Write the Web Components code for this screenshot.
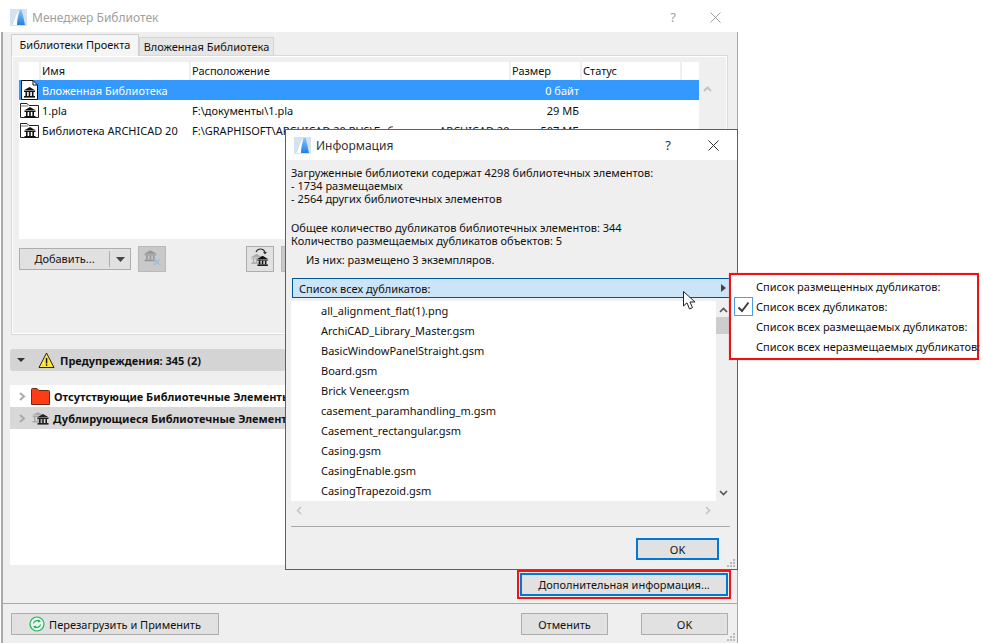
<!DOCTYPE html>
<html>
<head>
<meta charset="utf-8">
<title>Менеджер Библиотек</title>
<style>
    html, body { margin: 0; padding: 0; background: #fff; }
    body { width: 983px; height: 643px; position: relative; overflow: hidden; font: 11px "Noto Sans", "Open Sans", sans-serif; color: #111; }
</style>
</head>
<body>
<manager-window></manager-window>
<info-dialog></info-dialog>
<dup-menu></dup-menu>
<mouse-cursor></mouse-cursor>

<script>
const TEMPLE = `<path d="M8 3 14 6.5H2Z" fill="currentColor"/><rect x="2.5" y="7" width="11" height="1" fill="currentColor"/><rect x="4" y="8" width="1.6" height="4" fill="currentColor"/><rect x="7.2" y="8" width="1.6" height="4" fill="currentColor"/><rect x="10.4" y="8" width="1.6" height="4" fill="currentColor"/><rect x="2.5" y="12" width="11" height="1.6" fill="currentColor"/>`;

class LibIcon extends HTMLElement {
    constructor() {
        super();
        const kind = this.getAttribute('kind');
        const icons = {
            doc: `<svg width="19" height="20" viewBox="0 0 19 20"><path d="M1.5.5H13L17.5 5V19.5H1.5Z" fill="#fff" stroke="#111"/><path d="M13 .5V5H17.5" fill="none" stroke="#111"/><g transform="translate(1.5 4)" color="#111">${TEMPLE}</g></svg>`,
            folder: `<svg width="19" height="16" viewBox="0 0 19 16"><path d="M.5 15.5V1.5H7L9 3.5H18.5V15.5Z" fill="#fff" stroke="#222"/><path d="M.5 4H8" stroke="#777" fill="none"/><g transform="translate(2 2)" color="#111">${TEMPLE}</g></svg>`,
            remove: `<svg width="28" height="26" viewBox="0 0 28 26"><g transform="translate(4 1) scale(1.05)" color="#969696">${TEMPLE}</g><path d="M16 13l6 6m0-6-6 6" stroke="#9dbde0" stroke-width="1.5"/></svg>`,
            reload: `<svg width="28" height="26" viewBox="0 0 28 26"><g transform="translate(3 5) scale(.95)" color="#aaa">${TEMPLE}</g><g transform="translate(9 7) scale(.95)" color="#111">${TEMPLE}</g><path d="M10 6C12 2 17 2 19 6" fill="none" stroke="#333" stroke-width="1.2"/><path d="M17 6h4l-2 2.5Z" fill="#333"/></svg>`,
            faded: `<svg width="28" height="26" viewBox="0 0 28 26"><g transform="translate(6 5)" color="#9fb8d5">${TEMPLE}</g></svg>`,
            warn: `<svg width="17" height="17" viewBox="0 0 17 17"><path d="M8.5 1 16 15.5H1Z" fill="#ffe63c" stroke="#222"/><rect x="7.8" y="6" width="1.5" height="5.5" fill="#111"/><rect x="7.8" y="12.3" width="1.5" height="1.5" fill="#111"/></svg>`,
            redfolder: `<svg width="19" height="17" viewBox="0 0 19 17"><path d="M.5 16.5V1.5Q.5.5 1.5.5H6L8 2.5H17.5Q18.5 2.5 18.5 3.5V16.5Z" fill="#ff3c14" stroke="#6b2a1c"/></svg>`,
            dup: `<svg width="18" height="15" viewBox="0 0 18 15"><g transform="translate(-1 -2)" color="#aaa">${TEMPLE}</g><g transform="translate(4 0)" color="#222">${TEMPLE}</g></svg>`,
            green: `<svg width="16" height="16" viewBox="0 0 16 16"><circle cx="8" cy="8" r="7" fill="#eaf7ee" stroke="#1fb35a" stroke-width="1.2"/><path d="M4.5 7.5C5 5 8 3.7 10.5 5.3M11.5 8.5C11 11 8 12.3 5.5 10.7" fill="none" stroke="#1fb35a" stroke-width="1.2"/><path d="M9.5 3.3 12 5.6 9 6.6ZM6.5 12.7 4 10.4 7 9.4Z" fill="#1fb35a"/></svg>`
        };
        const shadow = this.attachShadow({ mode: 'open' });
        shadow.innerHTML = `
            <style>
                :host { display: inline-flex; flex: none; }
                svg { display: block; }
            </style>
            ${icons[kind] || ''}
        `;
    }
}

class WinTitle extends HTMLElement {
    constructor() {
        super();
        const shadow = this.attachShadow({ mode: 'open' });
        shadow.innerHTML = `
            <style>
                :host { display: flex; align-items: center; height: 30px; background: #fff; flex: none; font-size: 12px; color: var(--title-color, #333); }
                svg { margin: 0 5px 0 var(--logo-left, 9px); flex: none; }
                span { flex: 1; }
                .help { flex: none; width: 14px; text-align: center; font-size: 13px; }
                .close { flex: none; margin: 0 var(--close-right, 16px) 0 var(--close-gap, 33px); }
            </style>
            <svg width="17" height="17" viewBox="0 0 17 17">
                <defs><linearGradient id="g" x1="0" y1="0" x2="0" y2="1"><stop offset="0" stop-color="#8fc4f2"/><stop offset="1" stop-color="#1f7fe6"/></linearGradient></defs>
                <rect width="17" height="17" fill="#d3e3f2"/>
                <path d="M2 16C4 12 6 4 9.5 1H11.5C13 5 14 12 15 16Z" fill="url(#g)"/>
                <path d="M2 16C4 12 6 4 9.5 1C8 6 7 12 7 16Z" fill="#fff"/>
            </svg>
            <span><slot></slot></span>
            <div class="help">?</div>
            <svg class="close" width="11" height="11" viewBox="0 0 11 11"><path d="M.5.5l10 10m0-10-10 10" stroke="currentColor" fill="none"/></svg>
        `;
    }
}

class AcButton extends HTMLElement {
    constructor() {
        super();
        const shadow = this.attachShadow({ mode: 'open' });
        shadow.innerHTML = `
            <style>
                :host { display: flex; align-items: center; justify-content: center; box-sizing: border-box; height: 22px; background: #e1e1e1; border: 1px solid #adadad; flex: none; white-space: nowrap; }
                :host([primary]) { border: 2px solid #0078d7; }
            </style>
            <slot></slot>
        `;
    }
}

class LibTable extends HTMLElement {
    constructor() {
        super();
        const rows = [
            ['doc', 'Вложенная Библиотека', '', '0 байт', true],
            ['folder', '1.pla', 'F:\\документы\\1.pla', '29 МБ', false],
            ['folder', 'Библиотека ARCHICAD 20', 'F:\\GRAPHISOFT\\ARCHICAD 20 RUS\\Библиотека ARCHICAD 20', '507 МБ', false]
        ];
        const shadow = this.attachShadow({ mode: 'open' });
        shadow.innerHTML = `
            <style>
                :host { display: flex; height: 177px; }
                .table { width: 680px; background: #fff; display: flex; flex-direction: column; }
                .row { display: grid; grid-template-columns: 20px 150px 320px 71px 100px 19px; height: 20px; align-items: center; white-space: nowrap; }
                .head { height: 18px; }
                .head div { height: 100%; border-left: 2px solid #efefef; padding-left: 1px; line-height: 18px; box-sizing: border-box; }
                .head div:first-child { border: 0; }
                .sel { background: #3399ff; color: #fff; }
                .cell { overflow: hidden; padding-left: 3px; }
                .ico { display: flex; align-items: center; justify-content: center; padding-left: 1px; }
                .num { text-align: right; padding-right: 1px; }
                .bar { width: 17px; display: flex; justify-content: center; padding-top: 24px; }
            </style>
            <div class="table">
                <div class="row head"><div></div><div>Имя</div><div>Расположение</div><div>Размер</div><div>Статус</div><div></div></div>
                ${rows.map(r => `
                    <div class="row ${r[4] ? 'sel' : ''}">
                        <div class="ico"><lib-icon kind="${r[0]}"></lib-icon></div>
                        <div class="cell">${r[1]}</div>
                        <div class="cell">${r[2]}</div>
                        <div class="cell num">${r[3]}</div>
                        <div></div><div></div>
                    </div>`).join('')}
            </div>
            <div class="bar"><svg width="9" height="6" viewBox="0 0 9 6"><path d="M1 5 4.5 1.5 8 5" fill="none" stroke="#c4c4c4" stroke-width="2"/></svg></div>
        `;
    }
}

class ManagerWindow extends HTMLElement {
    constructor() {
        super();
        const shadow = this.attachShadow({ mode: 'open' });
        shadow.innerHTML = `
            <style>
                :host { display: flex; flex-direction: column; position: absolute; left: 1px; top: 2px; width: 737px; height: 641px; box-sizing: border-box; }
                win-title { --title-color: #a0a0a0; --logo-left: 9px; --close-gap: 30px; --close-right: 17px; }
                .body { flex: 1; display: flex; flex-direction: column; background: #efefef; border-left: 2px solid #a9a9a9; border-right: 1px solid #a9a9a9; }
                .tabs { display: flex; align-items: flex-end; height: 23px; margin: 0 0 0 8px; }
                .tab { box-sizing: border-box; height: 18px; line-height: 17px; padding: 0 3px; background: #e6e6e6; border: 1px solid #d4d4d4; border-bottom: 0; width: 135px; text-align: center; }
                .tab.on { height: 22px; width: 128px; background: #fff; background: #f5f5f5; line-height: 20px; border-color: #cfcfcf; margin-bottom: -1px; position: relative; z-index: 1; }
                .panel { box-sizing: border-box; height: 280px; margin: 0 9px 0 8px; padding: 6px 7px; border: 1px solid #d9d9d9; outline: 1px solid #fff; outline-offset: -2px; }
                .tools { display: flex; align-items: center; gap: 7px; margin-top: 7px; height: 26px; }
                .add { width: 112px; justify-content: flex-start; }
                .add span:first-child { width: 89px; text-align: center; border-right: 1px solid #adadad; line-height: 16px; }
                .add span:last-child { flex: 1; display: flex; justify-content: center; }
                .sq { box-sizing: border-box; width: 28px; height: 26px; border: 1px solid #b8b8b8; background: #c9c9c9; }
                .sq.lt { border-color: #adadad; background: #e1e1e1; margin-left: 73px; }
                .sq.last { margin-left: -5px; }
                .warn { display: flex; align-items: center; height: 22px; margin: 14px 8px 14px 7px; background: #d4d4d4; border-radius: 3px; font-weight: 700; }
                .warn i { width: 0; height: 0; border: 4px solid transparent; border-top: 4px solid #333; border-bottom: 0; margin: 0 13px 0 7px; }
                .warn lib-icon { margin-right: 5px; }
                .tree { height: 180px; margin: 0 8px 0 7px; background: #fff; font-weight: 700; }
                .node { display: flex; align-items: center; height: 22px; white-space: nowrap; overflow: hidden; padding-left: 9px; }
                .node.alt { background: #d8d8d8; }
                .node svg { margin-right: 5px; flex: none; }
                .node lib-icon { margin-right: 4px; }
                .more { display: flex; justify-content: flex-end; margin: 8px 9px 0 0; height: 23px; }
                .more ac-button { width: 208px; height: 23px; outline: 2px solid #f01616; outline-offset: 1px; }
                hr { margin: 7px 0 0; border: 0; border-top: 1px solid #a9a9a9; height: 0; }
                .foot { display: flex; align-items: center; padding: 9px 9px 0 8px; }
                .foot .re { width: 208px; gap: 4px; margin-right: auto; }
                .foot .cancel { width: 87px; margin-right: 33px; }
                .foot .ok { width: 87px; }
                .grip { position: absolute; right: 2px; bottom: 1px; }
            </style>
            <win-title>Менеджер Библиотек</win-title>
            <div class="body">
                <div class="tabs">
                    <div class="tab on">Библиотеки Проекта</div>
                    <div class="tab">Вложенная Библиотека</div>
                </div>
                <div class="panel">
                    <lib-table></lib-table>
                    <div class="tools">
                        <ac-button class="add"><span>Добавить...</span><span><svg width="9" height="5" viewBox="0 0 9 5"><path d="M0 0H9L4.5 5Z" fill="#444"/></svg></span></ac-button>
                        <ac-button class="sq"><lib-icon kind="remove"></lib-icon></ac-button>
                        <ac-button class="sq lt"><lib-icon kind="reload"></lib-icon></ac-button>
                        <ac-button class="sq"><lib-icon kind="faded"></lib-icon></ac-button>
                    </div>
                </div>
                <div class="warn"><i></i><lib-icon kind="warn"></lib-icon>Предупреждения: 345 (2)</div>
                <div class="tree">
                    <div class="node"><svg width="7" height="9" viewBox="0 0 7 9"><path d="M1 1 5 4.5 1 8" fill="none" stroke="#aaa" stroke-width="2"/></svg><lib-icon kind="redfolder"></lib-icon>Отсутствующие Библиотечные Элементы</div>
                    <div class="node alt"><svg width="7" height="9" viewBox="0 0 7 9"><path d="M1 1 5 4.5 1 8" fill="none" stroke="#aaa" stroke-width="2"/></svg><lib-icon kind="dup"></lib-icon>Дублирующиеся Библиотечные Элементы</div>
                </div>
                <div class="more"><ac-button primary>Дополнительная информация...</ac-button></div>
                <hr>
                <div class="foot">
                    <ac-button class="re"><lib-icon kind="green"></lib-icon>Перезагрузить и Применить</ac-button>
                    <ac-button class="cancel">Отменить</ac-button>
                    <ac-button class="ok">OK</ac-button>
                </div>
            </div>
            <svg class="grip" width="9" height="9" viewBox="0 0 9 9" fill="#bbb"><rect x="6" y="0" width="2" height="2"/><rect x="3" y="3" width="2" height="2"/><rect x="6" y="3" width="2" height="2"/><rect x="0" y="6" width="2" height="2"/><rect x="3" y="6" width="2" height="2"/><rect x="6" y="6" width="2" height="2"/></svg>
        `;
    }
}

class InfoDialog extends HTMLElement {
    constructor() {
        super();
        const files = ['all_alignment_flat(1).png', 'ArchiCAD_Library_Master.gsm', 'BasicWindowPanelStraight.gsm', 'Board.gsm', 'Brick Veneer.gsm', 'casement_paramhandling_m.gsm', 'Casement_rectangular.gsm', 'Casing.gsm', 'CasingEnable.gsm', 'CasingTrapezoid.gsm'];
        const shadow = this.attachShadow({ mode: 'open' });
        shadow.innerHTML = `
            <style>
                :host { display: flex; flex-direction: column; position: absolute; left: 285px; top: 129px; width: 453px; height: 441px; box-sizing: border-box; border: 1px solid #0078d7; background: #efefef; }
                win-title { --logo-left: 8px; --close-gap: 33px; --close-right: 18px; }
                .info { padding: 6px 5px 0 5px; line-height: 13px; height: 111px; box-sizing: border-box; flex: none; }
                .info p { margin: 0; }
                .gap { margin-top: 16px !important; }
                .ind { margin: 6px 0 0 15px !important; }
                .combo { display: flex; align-items: center; justify-content: space-between; box-sizing: border-box; height: 20px; margin: 7px 7px 0 6px; padding: 0 3px 0 6px; background: #cce4f7; border: 1px solid #005499; flex: none; }
                .combo i { border: 4px solid transparent; border-left: 5px solid #444; border-right: 0; }
                .list { display: flex; margin: 3px 7px 0 5px; flex: none; }
                .items { flex: 1; background: #fff; }
                .items div { height: 20px; line-height: 20px; padding-left: 30px; }
                .sb { width: 14px; display: flex; flex-direction: column; align-items: center; position: relative; }
                .sb .th { width: 100%; height: 17px; margin-top: 4px; background: #cdcdcd; }
                .sb .up { margin-top: 6px; }
                .sb .dn { margin-top: auto; margin-bottom: 5px; }
                .hs { display: flex; justify-content: space-between; margin: 5px 26px 0 10px; height: 10px; flex: none; }
                hr { margin: 10px 7px 0 5px; border: 0; border-top: 1px solid #a9a9a9; height: 0; flex: none; }
                .act { display: flex; justify-content: flex-end; margin: 11px 18px 0 0; }
                .act ac-button { width: 83px; }
                .grip { position: absolute; right: 1px; bottom: 1px; }
            </style>
            <win-title>Информация</win-title>
            <div class="info">
                <p>Загруженные библиотеки содержат 4298 библиотечных элементов:</p>
                <p>- 1734 размещаемых</p>
                <p>- 2564 других библиотечных элементов</p>
                <p class="gap">Общее количество дубликатов библиотечных элементов: 344</p>
                <p>Количество размещаемых дубликатов объектов: 5</p>
                <p class="ind">Из них: размещено 3 экземпляров.</p>
            </div>
            <div class="combo"><span>Список всех дубликатов:</span><i></i></div>
            <div class="list">
                <div class="items">${files.map(f => `<div>${f}</div>`).join('')}</div>
                <div class="sb">
                    <svg class="up" width="9" height="6" viewBox="0 0 9 6"><path d="M1 5 4.5 1.5 8 5" fill="none" stroke="#555" stroke-width="1.6"/></svg>
                    <div class="th"></div>
                    <svg class="dn" width="9" height="6" viewBox="0 0 9 6"><path d="M1 1 4.5 4.5 8 1" fill="none" stroke="#555" stroke-width="1.6"/></svg>
                </div>
            </div>
            <div class="hs">
                <svg width="6" height="9" viewBox="0 0 6 9"><path d="M5 1 1.5 4.5 5 8" fill="none" stroke="#c4c4c4" stroke-width="1.6"/></svg>
                <svg width="6" height="9" viewBox="0 0 6 9"><path d="M1 1 4.5 4.5 1 8" fill="none" stroke="#c4c4c4" stroke-width="1.6"/></svg>
            </div>
            <hr>
            <div class="act"><ac-button primary>OK</ac-button></div>
            <svg class="grip" width="9" height="9" viewBox="0 0 9 9" fill="#bbb"><rect x="6" y="0" width="2" height="2"/><rect x="3" y="3" width="2" height="2"/><rect x="6" y="3" width="2" height="2"/><rect x="0" y="6" width="2" height="2"/><rect x="3" y="6" width="2" height="2"/><rect x="6" y="6" width="2" height="2"/></svg>
        `;
    }
}

class DupMenu extends HTMLElement {
    constructor() {
        super();
        const items = ['Список размещенных дубликатов:', 'Список всех дубликатов:', 'Список всех размещаемых дубликатов:', 'Список всех неразмещаемых дубликатов:'];
        const shadow = this.attachShadow({ mode: 'open' });
        shadow.innerHTML = `
            <style>
                :host { display: flex; flex-direction: column; justify-content: center; position: absolute; left: 729px; top: 273px; width: 250px; height: 87px; box-sizing: border-box; background: #fff; border: 2px solid #ee1212; box-shadow: 0 0 1px #f88; }
                .it { display: flex; align-items: center; height: 20px; white-space: nowrap; }
                .ck { flex: none; width: 19px; height: 19px; box-sizing: border-box; margin: 0 3px 0 3px; display: flex; align-items: center; justify-content: center; }
                .ck.on { border: 1px solid #4a9fe6; }
            </style>
            ${items.map((t, i) => `
                <div class="it">
                    <div class="ck ${i === 1 ? 'on' : ''}">${i === 1 ? '<svg width="13" height="12" viewBox="0 0 13 12"><path d="M1.5 6.5 5 10 11.5 1.5" fill="none" stroke="#3a3f44" stroke-width="2"/></svg>' : ''}</div>
                    <span>${t}</span>
                </div>`).join('')}
        `;
    }
}

class MouseCursor extends HTMLElement {
    constructor() {
        super();
        const shadow = this.attachShadow({ mode: 'open' });
        shadow.innerHTML = `
            <style>
                :host { display: block; position: absolute; left: 683px; top: 291px; width: 13px; height: 20px; }
                svg { display: block; }
            </style>
            <svg width="13" height="20" viewBox="0 0 13 20"><path d="M.5.5V15L4 11.8 6.5 18 9.5 16.7 7 11H12Z" fill="#fff" stroke="#222"/></svg>
        `;
    }
}

customElements.define('lib-icon', LibIcon);
customElements.define('win-title', WinTitle);
customElements.define('ac-button', AcButton);
customElements.define('lib-table', LibTable);
customElements.define('manager-window', ManagerWindow);
customElements.define('info-dialog', InfoDialog);
customElements.define('dup-menu', DupMenu);
customElements.define('mouse-cursor', MouseCursor);
</script>
</body>
</html>
